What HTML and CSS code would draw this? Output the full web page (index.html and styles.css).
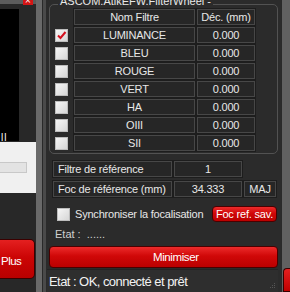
FILE: index.html
```html
<!DOCTYPE html>
<html lang="fr">
<head>
    <meta charset="UTF-8">
    <title>Roue a filtres</title>
    <link rel="stylesheet" href="styles.css">
</head>
<body>
    <div class="app">
        <div class="side">
            <div class="side-top"><span class="close">&times;</span></div>
            <div class="video"><span class="video-txt">ll</span></div>
            <div class="light-panel"><div class="slider"></div></div>
            <div class="plus-btn">Plus</div>
        </div>
        <div class="splitter"></div>
        <div class="main">
            <div class="wheel">
                <span class="wheel-title">ASCOM.AtikEFW.FilterWheel -</span>
                <div class="row">
                    <span class="cb-space"></span>
                    <div class="cell name">Nom Filtre</div>
                    <div class="cell off">Déc. (mm)</div>
                </div>
                <div class="row">
                    <span class="cb checked">
                        <svg width="13" height="13" viewBox="0 0 13 13"><path d="M3 6.5 L5.5 9 L10.5 3" fill="none" stroke="#d3101e" stroke-width="2"/></svg>
                    </span>
                    <div class="cell name">LUMINANCE</div>
                    <div class="cell off">0.000</div>
                </div>
                <div class="row">
                    <span class="cb"></span>
                    <div class="cell name">BLEU</div>
                    <div class="cell off">0.000</div>
                </div>
                <div class="row">
                    <span class="cb"></span>
                    <div class="cell name">ROUGE</div>
                    <div class="cell off">0.000</div>
                </div>
                <div class="row">
                    <span class="cb"></span>
                    <div class="cell name">VERT</div>
                    <div class="cell off">0.000</div>
                </div>
                <div class="row">
                    <span class="cb"></span>
                    <div class="cell name">HA</div>
                    <div class="cell off">0.000</div>
                </div>
                <div class="row">
                    <span class="cb"></span>
                    <div class="cell name">OIII</div>
                    <div class="cell off">0.000</div>
                </div>
                <div class="row">
                    <span class="cb"></span>
                    <div class="cell name">SII</div>
                    <div class="cell off">0.000</div>
                </div>
            </div>

            <div class="ref-row first">
                <div class="cell label">Filtre de référence</div>
                <div class="cell value">1</div>
            </div>
            <div class="ref-row">
                <div class="cell label">Foc de référence (mm)</div>
                <div class="cell value">34.333</div>
                <div class="cell maj">MAJ</div>
            </div>

            <div class="sync-row">
                <span class="cb"></span>
                <span class="sync-text">Synchroniser la focalisation</span>
                <span class="red-btn small">Foc ref. sav.</span>
            </div>
            <div class="etat">Etat :&nbsp; ......</div>
            <div class="red-btn big">Minimiser</div>
            <div class="status">
                <span>Etat : OK, connecté et prêt</span>
                <svg class="grip" width="8" height="8" viewBox="0 0 8 8">
                    <rect x="6" y="2" width="1" height="1" fill="#555"/>
                    <rect x="4" y="4" width="1" height="1" fill="#555"/>
                    <rect x="6" y="4" width="1" height="1" fill="#555"/>
                    <rect x="2" y="6" width="1" height="1" fill="#555"/>
                    <rect x="4" y="6" width="1" height="1" fill="#555"/>
                    <rect x="6" y="6" width="1" height="1" fill="#555"/>
                </svg>
            </div>
        </div>
        <div class="edge"><div class="edge-btn"></div></div>
    </div>
</body>
</html>
```

FILE: styles.css
```css
body {
    margin: 0;
    font-family: "Liberation Sans", Arial, sans-serif;
    font-size: 11px;
    color: #e8e8e8;
    background: #2b2b2b;
}
.app {
    display: flex;
    height: 292px;
    overflow: hidden;
}

/* left column (camera view) */
.side {
    width: 36px;
    display: flex;
    flex-direction: column;
    background: #282828;
}
.side-top {
    height: 4px;
    background: #5c5c5c;
    display: flex;
    justify-content: flex-end;
    padding-right: 3px;
}
.close {
    width: 10px;
    height: 5px;
    background: #d41515;
    color: #fff;
    font-size: 10px;
    line-height: 2px;
    text-align: center;
    overflow: hidden;
}
.video {
    margin-top: 5px;
    width: 19px;
    height: 132px;
    background: #000;
    display: flex;
    align-items: flex-end;
    overflow: hidden;
}
.video-txt {
    color: #fff;
    font-size: 10px;
    line-height: 7px;
    letter-spacing: 1px;
    padding-left: 1px;
}
.light-panel {
    margin-top: 1px;
    height: 51px;
    background: #f0f0f0;
}
.slider {
    margin-top: 20px;
    width: 26px;
    height: 9px;
    background: #e3e3e3;
    border: 1px solid #c8c8c8;
    border-left: none;
}
.plus-btn {
    margin-top: 46px;
    height: 38px;
    margin-right: 1px;
    background: linear-gradient(#e42020, #cc0505 45%, #b80000);
    border: 1px solid #3a0000;
    border-left: none;
    border-radius: 0 5px 5px 0;
    color: #fff;
    font-size: 11.5px;
    letter-spacing: -0.5px;
    display: flex;
    align-items: center;
    padding-top: 3px;
    box-sizing: border-box;
    height: 40px;
    text-indent: 1px;
}

.splitter {
    width: 11px;
    background: linear-gradient(to right, #696969 0, #696969 6px, #292929 6px, #292929 7px, #4a4a4a 7px, #4a4a4a 10px, #2b2b2b 10px);
}

/* main panel */
.main {
    width: 234px;
    display: flex;
    flex-direction: column;
}
.wheel {
    position: relative;
    margin: 4px 3px 0 2px;
    border: 1px solid #525252;
    border-radius: 5px;
    padding: 4px 0 0 5px;
    display: flex;
    flex-direction: column;
    gap: 2px;
    height: 146px;
}
.wheel-title {
    position: absolute;
    left: 8px;
    top: -10px;
    padding: 0 2px;
    background: #2b2b2b;
    line-height: 13px;
    white-space: nowrap;
}
.row {
    display: flex;
    align-items: center;
    height: 16px;
}
.cb-space {
    width: 19px;
}
.cb {
    width: 13px;
    height: 13px;
    margin-right: 6px;
    background: linear-gradient(135deg, #f6f6f6, #d6d6d6);
    box-sizing: border-box;
    border: 1px solid #bdbdbd;
    flex-shrink: 0;
}
.cb svg {
    display: block;
    margin: -1px;
}
.cell {
    height: 16px;
    box-sizing: border-box;
    border: 1px solid #474747;
    box-shadow: 0 0 0 1px #1d1d1d;
    background: #262626;
    line-height: 14px;
    text-align: center;
    letter-spacing: -0.2px;
    white-space: nowrap;
}
.name {
    width: 121px;
    margin-right: 2px;
}
.off {
    width: 58px;
}

.ref-row {
    display: flex;
    gap: 2px;
    margin: 4px 0 0 6px;
}
.ref-row.first {
    margin-top: 7px;
}
.label {
    width: 119px;
    text-align: left;
    padding-left: 4px;
}
.value {
    width: 68px;
}
.maj {
    width: 32px;
}

.sync-row {
    display: flex;
    align-items: center;
    margin: 9px 4px 0 10px;
    height: 16px;
}
.sync-row .cb {
    margin-right: 5px;
}
.sync-text {
    flex: 1;
    font-size: 11px;
    letter-spacing: -0.2px;
}
.red-btn {
    background: linear-gradient(#ec2b2b, #d00808 45%, #bb0000);
    border: 1px solid #4a0000;
    border-radius: 4px;
    color: #fff;
    box-sizing: border-box;
}
.red-btn.small {
    width: 65px;
    height: 16px;
    line-height: 14px;
    text-align: center;
    font-size: 11px;
    letter-spacing: -0.2px;
}
.etat {
    margin: 6px 0 0 8px;
    color: #d0d0d0;
    line-height: 13px;
}
.red-btn.big {
    margin: 5px 3px 0 2px;
    height: 22px;
    line-height: 20px;
    font-size: 11.5px;
    letter-spacing: -0.4px;
    padding-left: 103px;
}
.status {
    margin: 1px 3px 0 0;
    height: 22px;
    background: #2e2e2e;
    border-top: 1px solid #232323;
    display: flex;
    align-items: center;
    justify-content: space-between;
    font-size: 13px;
    letter-spacing: -0.55px;
    color: #f2f2f2;
    padding: 0 2px;
}
.grip {
    align-self: flex-end;
    margin-bottom: 3px;
}

.edge {
    width: 9px;
    background: linear-gradient(to right, #2a2a2a 0, #2a2a2a 1px, #616161 1px);
    display: flex;
    flex-direction: column;
    justify-content: flex-end;
}
.edge-btn {
    height: 22px;
    margin-left: 2px;
    background: linear-gradient(#e42020, #c00000);
    border: 1px solid #3a0000;
    border-right: none;
    border-radius: 4px 0 0 0;
}
```
